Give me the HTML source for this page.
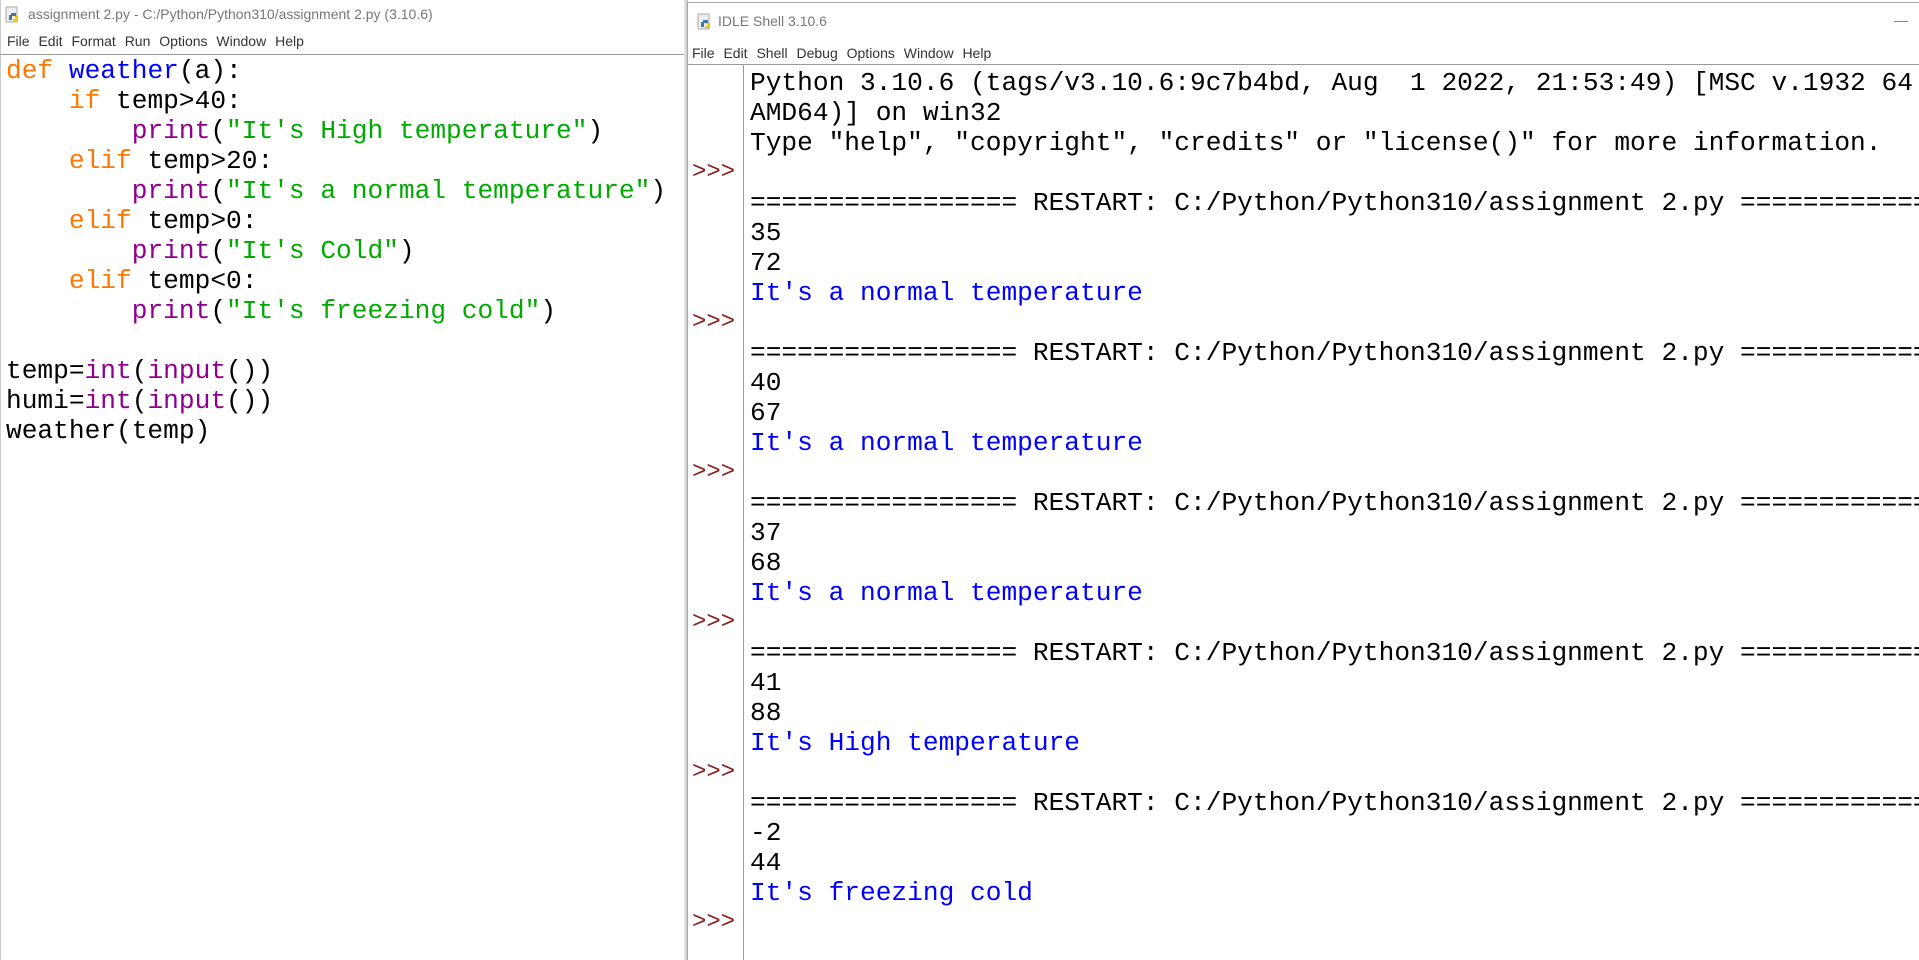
<!DOCTYPE html>
<html><head><meta charset="utf-8"><style>
*{margin:0;padding:0;box-sizing:border-box}
body{width:1919px;height:960px;overflow:hidden;background:#fff;position:relative;font-family:"Liberation Sans",sans-serif}
.ui{font-family:"Liberation Sans",sans-serif;font-size:14px;color:#333;position:absolute;white-space:nowrap}
pre{font-family:"Liberation Mono","Courier New",monospace;font-size:26.2px;line-height:30px;position:absolute;white-space:pre;color:#000}
.k{color:#ff7700}.d{color:#0000ff}.b{color:#900090}.s{color:#00aa00}.o{color:#0000ff}.p{color:#882222}
.icon{position:absolute;width:16px;height:18px}
</style></head><body>
<div style="position:absolute;left:0;top:0;width:686px;height:960px;background:#fff;border-left:1px solid #ccc"></div>
<svg class="icon" style="left:5px;top:6px" viewBox="0 0 16 18"><rect x="1" y="1" width="11" height="15" fill="#eee" stroke="#aaa"/><path d="M6 7h5v3H7v4H4V9h2z" fill="#3b77a8"/><path d="M9 10h4v5H8v-2h3z" fill="#f5c400"/></svg>
<div class="ui" style="left:28px;top:6px;color:#777;font-size:14px">assignment 2.py - C:/Python/Python310/assignment 2.py (3.10.6)</div>
<div class="ui" style="left:7px;top:33px;word-spacing:5px">File Edit Format Run Options Window Help</div>
<div style="position:absolute;left:0;top:54px;width:686px;height:1px;background:#999"></div>
<pre style="left:6px;top:56px"><span class="k">def</span> <span class="d">weather</span>(a):
    <span class="k">if</span> temp&gt;40:
        <span class="b">print</span>(<span class="s">"It's High temperature"</span>)
    <span class="k">elif</span> temp&gt;20:
        <span class="b">print</span>(<span class="s">"It's a normal temperature"</span>)
    <span class="k">elif</span> temp&gt;0:
        <span class="b">print</span>(<span class="s">"It's Cold"</span>)
    <span class="k">elif</span> temp&lt;0:
        <span class="b">print</span>(<span class="s">"It's freezing cold"</span>)

temp=<span class="b">int</span>(<span class="b">input</span>())
humi=<span class="b">int</span>(<span class="b">input</span>())
weather(temp)</pre>
<div style="position:absolute;left:684px;top:0;width:4px;height:960px;background:linear-gradient(90deg,#eee,#bbb)"></div>
<div style="position:absolute;left:687px;top:2px;width:1232px;height:958px;background:#fff;border-top:1px solid #aaa;border-left:1px solid #aaa;overflow:hidden">
<svg class="icon" style="left:9px;top:10px" viewBox="0 0 16 18"><rect x="1" y="1" width="11" height="15" fill="#eee" stroke="#aaa"/><path d="M6 7h5v3H7v4H4V9h2z" fill="#3b77a8"/><path d="M9 10h4v5H8v-2h3z" fill="#f5c400"/></svg>
<div class="ui" style="left:30px;top:10px;color:#777">IDLE Shell 3.10.6</div>
<div style="position:absolute;left:1206px;top:18px;width:14px;height:1px;background:#888"></div>
<div class="ui" style="left:4px;top:42px;word-spacing:5px">File Edit Shell Debug Options Window Help</div>
<div style="position:absolute;left:0;top:61px;width:1232px;height:1px;background:#999"></div>
<div style="position:absolute;left:55px;top:62px;width:1px;height:900px;background:#999"></div>
<pre class="p" style="left:4px;top:155px;font-size:24px">&gt;&gt;&gt;</pre>
<pre class="p" style="left:4px;top:305px;font-size:24px">&gt;&gt;&gt;</pre>
<pre class="p" style="left:4px;top:455px;font-size:24px">&gt;&gt;&gt;</pre>
<pre class="p" style="left:4px;top:605px;font-size:24px">&gt;&gt;&gt;</pre>
<pre class="p" style="left:4px;top:755px;font-size:24px">&gt;&gt;&gt;</pre>
<pre class="p" style="left:4px;top:905px;font-size:24px">&gt;&gt;&gt;</pre>
<pre style="left:62px;top:65px">Python 3.10.6 (tags/v3.10.6:9c7b4bd, Aug  1 2022, 21:53:49) [MSC v.1932 64 bit
AMD64)] on win32
Type "help", "copyright", "credits" or "license()" for more information.

================= RESTART: C:/Python/Python310/assignment 2.py ================
35
72
<span class="o">It's a normal temperature</span>

================= RESTART: C:/Python/Python310/assignment 2.py ================
40
67
<span class="o">It's a normal temperature</span>

================= RESTART: C:/Python/Python310/assignment 2.py ================
37
68
<span class="o">It's a normal temperature</span>

================= RESTART: C:/Python/Python310/assignment 2.py ================
41
88
<span class="o">It's High temperature</span>

================= RESTART: C:/Python/Python310/assignment 2.py ================
-2
44
<span class="o">It's freezing cold</span>
</pre>
</div>
</body></html>
